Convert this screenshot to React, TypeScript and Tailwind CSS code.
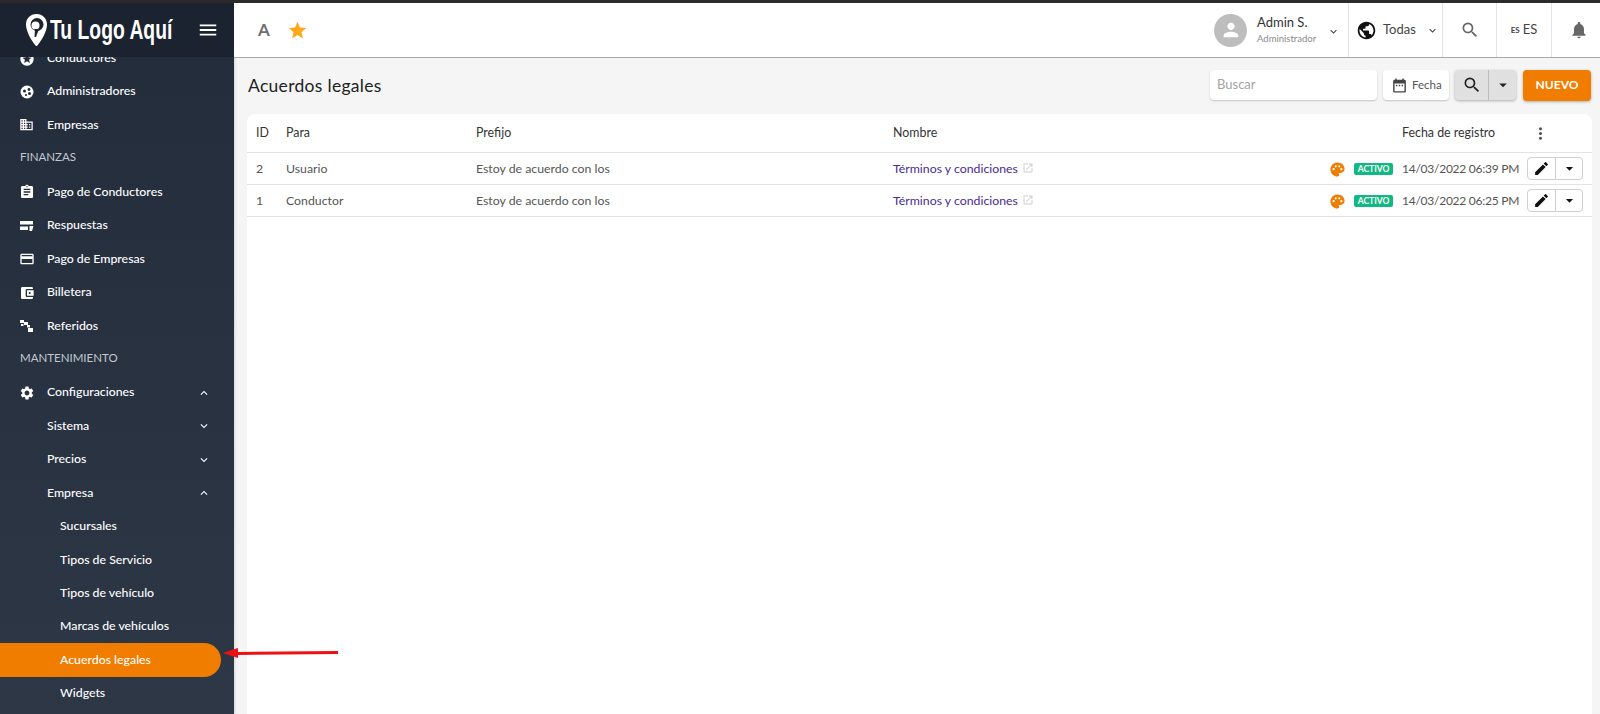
import React from 'react';
import {
  MdMenu, MdStar, MdPerson, MdPublic, MdKeyboardArrowDown, MdKeyboardArrowUp, MdSearch, MdNotifications,
  MdDateRange, MdArrowDropDown, MdMoreVert, MdEdit, MdPalette, MdOpenInNew, MdBusiness, MdAssignment,
  MdCreditCard, MdAccountBalanceWallet, MdSettings, MdStars,
} from 'react-icons/md';

const font = { fontFamily: 'Lato, "Noto Sans", sans-serif' };

// icons the packages have no close match for
const AdminIcon = () => (
  <svg width="16" height="16" viewBox="0 0 16 16">
    <circle cx="8" cy="8" r="6.500" fill="#fff" />
    <circle cx="5.500" cy="7" r="1.500" fill="#222c3b" />
    <circle cx="10" cy="5.500" r="1.400" fill="#222c3b" />
    <circle cx="10.500" cy="9.500" r="1.500" fill="#222c3b" />
    <circle cx="7" cy="11" r="1.100" fill="#222c3b" />
  </svg>
);

const AnswersIcon = () => (
  <svg width="16" height="16" viewBox="0 0 16 16" fill="#fff">
    <rect x="1" y="3" width="13" height="3.500" />
    <rect x="1" y="8.500" width="8" height="3.500" />
    <path d="M10.500 8h4l-1.500 5h-2.500z" />
  </svg>
);

const ReferralIcon = () => (
  <svg width="16" height="16" viewBox="0 0 16 16" fill="#fff">
    <rect x="1" y="2" width="4" height="3" />
    <rect x="5" y="4" width="4" height="3" />
    <rect x="8" y="7" width="3" height="2.500" />
    <rect x="9" y="10" width="5" height="4" />
    <rect x="2" y="6" width="2.500" height="2" />
  </svg>
);

type NavRow = {
  label: string;
  icon?: React.ReactNode;
  kind?: 'section' | 'sub' | 'leaf' | 'active';
  arrow?: 'up' | 'down';
};

const navRows: NavRow[] = [
  { label: 'Conductores', icon: <MdStars size={16} /> },
  { label: 'Administradores', icon: <AdminIcon /> },
  { label: 'Empresas', icon: <MdBusiness size={15} /> },
  { label: 'FINANZAS', kind: 'section' },
  { label: 'Pago de Conductores', icon: <MdAssignment size={16} /> },
  { label: 'Respuestas', icon: <AnswersIcon /> },
  { label: 'Pago de Empresas', icon: <MdCreditCard size={16} /> },
  { label: 'Billetera', icon: <MdAccountBalanceWallet size={16} /> },
  { label: 'Referidos', icon: <ReferralIcon /> },
  { label: 'MANTENIMIENTO', kind: 'section' },
  { label: 'Configuraciones', icon: <MdSettings size={16} />, arrow: 'up' },
  { label: 'Sistema', kind: 'sub', arrow: 'down' },
  { label: 'Precios', kind: 'sub', arrow: 'down' },
  { label: 'Empresa', kind: 'sub', arrow: 'up' },
  { label: 'Sucursales', kind: 'leaf' },
  { label: 'Tipos de Servicio', kind: 'leaf' },
  { label: 'Tipos de vehículo', kind: 'leaf' },
  { label: 'Marcas de vehículos', kind: 'leaf' },
  { label: 'Acuerdos legales', kind: 'active' },
  { label: 'Widgets', kind: 'leaf' },
];

const SidebarRow = ({ row }: { row: NavRow }) => {
  if (row.kind === 'section') {
    return <div className="h-[33.45px] flex items-center pl-[20px] pb-[4px] text-[11.5px] text-[#c4c8d0]">{row.label}</div>;
  }
  const isLeaf = row.kind === 'leaf' || row.kind === 'active';
  return (
    <div
      className={`h-[33.45px] flex items-center text-[12.3px] font-medium text-white ${isLeaf ? 'pl-[60px]' : 'pl-[47px]'} ${
        row.kind === 'active' ? 'bg-[#f07c00] rounded-r-full w-[221px]' : 'w-[234px]'
      } relative`}
    >
      {row.icon && <span className="absolute left-[19px] top-[9px]">{row.icon}</span>}
      <span>{row.label}</span>
      {row.arrow === 'up' && <MdKeyboardArrowUp size={14} className="absolute left-[197px] top-[10px]" />}
      {row.arrow === 'down' && <MdKeyboardArrowDown size={14} className="absolute left-[197px] top-[10px]" />}
    </div>
  );
};

const Sidebar = () => (
  <aside className="w-[234px] shrink-0 flex flex-col bg-gradient-to-b from-[#222c3b] to-[#2e3746] overflow-hidden">
    <div className="h-[54px] shrink-0 bg-[#1b2330] flex items-center pl-[26px] relative z-10">
      <svg width="21" height="32" viewBox="0 0 21 32" className="shrink-0">
        <path d="M10.500 0C4.500 0 0 4.600 0 10.500 0 17 5 26 9.500 31.500c.6.700 1.400.7 1.900 0C16 26 21 17 21 10.500 21 4.600 16.500 0 10.500 0Z" fill="#fff" />
        <circle cx="11" cy="10.500" r="6.500" fill="#1b2330" />
        <circle cx="9.500" cy="11.500" r="4" fill="#fff" />
        <path d="M9 15h4l-3 8h-1.500z" fill="#1b2330" />
      </svg>
      <span
        className="ml-[3px] text-[28px] font-bold text-white whitespace-nowrap origin-left scale-x-[0.69] leading-none"
        style={{ fontFamily: '"Liberation Sans", sans-serif' }}
      >
        Tu Logo Aquí
      </span>
      <MdMenu size={22} className="absolute left-[197px] top-[16px] text-white" />
    </div>
    <nav className="flex-1 overflow-hidden">
      <div className="-mt-[15.500px] flex flex-col">
        {navRows.map((row) => (
          <SidebarRow key={row.label} row={row} />
        ))}
      </div>
    </nav>
  </aside>
);

const TopBar = () => (
  <header className="h-[55px] shrink-0 bg-white border-b border-[#a8a8a8] flex items-center">
    <div className="flex-1 flex items-center pl-[24px] gap-[17px]">
      <span className="text-[17px] font-bold text-[#6f6f6f]">A</span>
      <MdStar size={21} className="text-[#ffa91a]" />
    </div>
    <div className="w-[134px] h-full flex items-center relative">
      <span className="w-[33px] h-[33px] rounded-full bg-[#bdbdbd] flex items-center justify-center">
        <MdPerson size={22} className="text-white" />
      </span>
      <div className="ml-[10px] flex flex-col -mt-[1px]">
        <span className="text-[13px] leading-[17px] text-[#333]">Admin S.</span>
        <span className="text-[9.5px] leading-[13px] text-[#8a8a8a] mt-[1px]">Administrador</span>
      </div>
      <MdKeyboardArrowDown size={13} className="absolute right-[8px] top-[22px] text-[#444]" />
    </div>
    <div className="w-[94px] h-full border-l border-[#e4e4e4] flex items-center pl-[7px]">
      <MdPublic size={21} className="text-[#111]" />
      <span className="ml-[6px] text-[13px] text-[#444]">Todas</span>
      <MdKeyboardArrowDown size={13} className="ml-[10px] text-[#444]" />
    </div>
    <div className="w-[54px] h-full border-l border-[#e4e4e4] flex items-center justify-center">
      <MdSearch size={20} className="text-[#666]" />
    </div>
    <div className="w-[55px] h-full border-l border-[#e4e4e4] flex items-center justify-center gap-[3px] text-[#444]">
      <span className="text-[8px] font-bold">ES</span>
      <span className="text-[13px]">ES</span>
    </div>
    <div className="w-[49px] h-full border-l border-[#e4e4e4] flex items-center justify-center pl-[6px]">
      <MdNotifications size={20} className="text-[#666]" />
    </div>
  </header>
);

const Toolbar = () => (
  <div className="h-[56px] shrink-0 flex items-center pl-[14px] pr-[9px] pb-[2px]">
    <h1 className="flex-1 mt-[2px] text-[17.500px] text-[#222] tracking-[0.3px]">Acuerdos legales</h1>
    <div className="w-[167px] h-[30px] bg-white rounded-[4px] shadow-[0_1px_2px_rgba(0,0,0,0.2)] flex items-center pl-[7px] text-[13px] text-[#a4a4a4]">
      Buscar
    </div>
    <div className="ml-[6px] w-[66px] h-[30px] bg-white rounded-[4px] shadow-[0_1px_2px_rgba(0,0,0,0.2)] flex items-center pl-[8px] text-[11.5px] text-[#555]">
      <MdDateRange size={17} className="text-[#444]" />
      <span className="ml-[4px]">Fecha</span>
    </div>
    <div className="ml-[6px] w-[61px] h-[30px] bg-[#e0e0e0] rounded-[4px] shadow-[0_1px_3px_rgba(0,0,0,0.3)] flex items-center">
      <div className="w-[34px] h-full border-r border-[#bcbcbc] flex items-center justify-center">
        <MdSearch size={20} className="text-[#222]" />
      </div>
      <div className="flex-1 flex items-center justify-center">
        <MdArrowDropDown size={18} className="text-[#222]" />
      </div>
    </div>
    <button className="ml-[7px] w-[68px] h-[31px] bg-[#f07c00] rounded-[4px] shadow-[0_1px_3px_rgba(0,0,0,0.3)] text-white text-[12px] font-bold">
      NUEVO
    </button>
  </div>
);

const gridCols = 'grid grid-cols-[39px_190px_417px_509px_125px_65px]';

const legalRows = [
  { id: 2, target: 'Usuario', date: '14/03/2022 06:39 PM' },
  { id: 1, target: 'Conductor', date: '14/03/2022 06:25 PM' },
];

const LegalTable = () => (
  <div className="flex-1 ml-[13px] mr-[8px] bg-white rounded-t-[8px] text-[12.3px]">
    <div className={`${gridCols} h-[39px] items-center border-b border-[#e2e2e2] text-[#333] text-[12.4px]`}>
      <div className="pl-[9px]">ID</div>
      <div>Para</div>
      <div>Prefijo</div>
      <div>Nombre</div>
      <div>Fecha de registro</div>
      <div className="pl-[4px]"><MdMoreVert size={19} className="text-[#555]" /></div>
    </div>
    {legalRows.map((row) => (
      <div key={row.id} className={`${gridCols} h-[32px] items-center border-b border-[#e2e2e2] text-[#555]`}>
        <div className="pl-[9px] pt-[1px]">{row.id}</div>
        <div className="pt-[1px]">{row.target}</div>
        <div className="pt-[1px]">Estoy de acuerdo con los</div>
        <div className="flex items-center pr-[9px] pt-[1px]">
          <span className="text-[#4a2a92]">Términos y condiciones</span>
          <MdOpenInNew size={12} className="ml-[4px] -mt-[3px] text-[#cfcfcf]" />
          <MdPalette size={17} className="ml-auto text-[#f07c00]" />
          <span className="ml-[8px] w-[39px] h-[12px] rounded-[2px] bg-[#10b981] text-white text-[8.5px] font-bold flex items-center justify-center">ACTIVO</span>
        </div>
        <div className="whitespace-nowrap text-[12px] tracking-[-0.25px] pt-[1px]">{row.date}</div>
        <div className="w-[56px] h-[23px] border border-[#cfcfcf] rounded-[4px] flex items-center">
          <div className="w-[28px] h-full border-r border-[#cfcfcf] flex items-center justify-center">
            <MdEdit size={17} className="text-[#111]" />
          </div>
          <div className="flex-1 flex items-center justify-center">
            <MdArrowDropDown size={17} className="text-[#111]" />
          </div>
        </div>
      </div>
    ))}
  </div>
);

export default function App() {
  return (
    <div className="w-[1600px] h-[714px] overflow-hidden flex flex-col relative" style={font}>
      <div className="h-[3px] shrink-0 bg-[#2b2b2b]" />
      <div className="flex-1 flex min-h-0">
        <Sidebar />
        <main className="flex-1 flex flex-col bg-[#f5f5f5] shadow-[inset_3px_0_3px_-2px_rgba(0,0,0,0.12)]">
          <TopBar />
          <Toolbar />
          <LegalTable />
        </main>
      </div>
      {/* red arrow drawn on top of the capture */}
      <svg className="absolute left-[220px] top-[641px]" width="122" height="24" viewBox="0 0 122 24">
        <path d="M3 12 L18 7 L18 11 L118 10 L118 13 L18 14 L18 17 Z" fill="#ee1111" />
      </svg>
    </div>
  );
}
